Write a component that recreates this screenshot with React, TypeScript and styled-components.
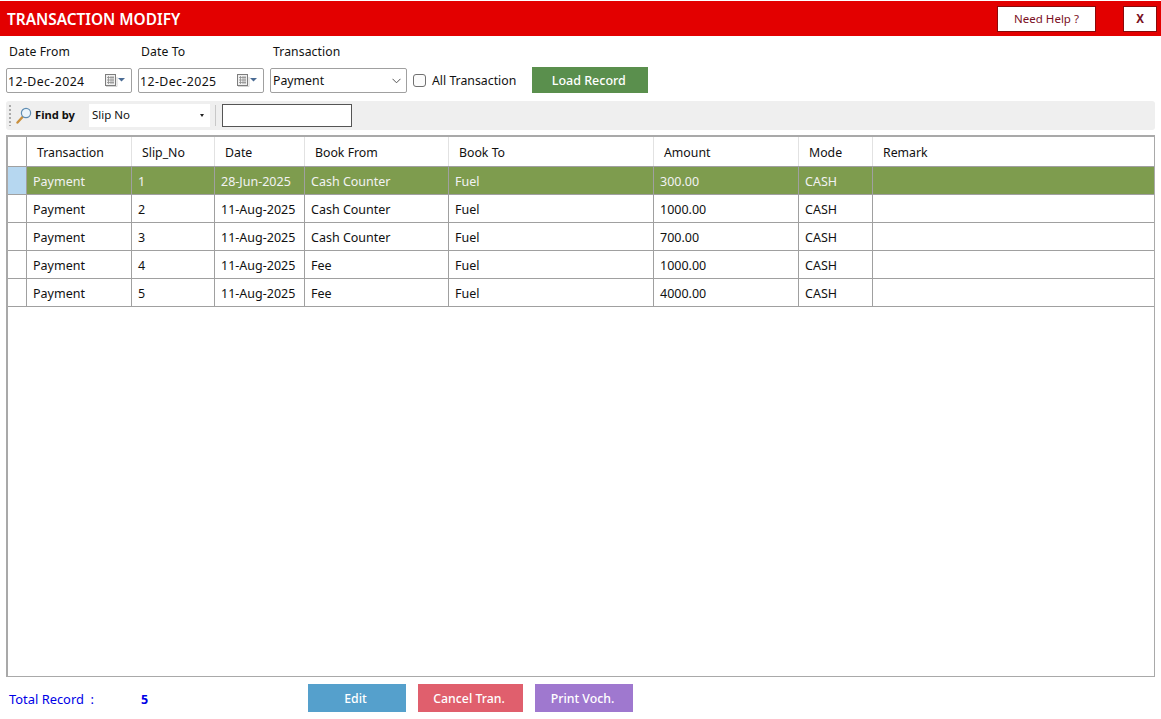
import React from "react";
import styled, { createGlobalStyle } from "styled-components";

const Global = createGlobalStyle`
  html, body { margin: 0; padding: 0; background: #fff; }
  * { box-sizing: border-box; }
  body { font-family: "Noto Sans", "Open Sans", sans-serif; font-size: 12px; color: #111; }
`;

const Page = styled.div`
  width: 1161px;
  height: 719px;
  padding-top: 1px;
  display: flex;
  flex-direction: column;
  overflow: hidden;
`;

const Header = styled.header`
  height: 35px;
  background: #e30000;
  display: flex;
  align-items: center;
  padding: 0 4px 0 7px;
`;

const Title = styled.h1`
  margin: 0;
  flex: 1;
  padding-top: 2px;
  font-size: 15.4px;
  font-weight: 600;
  color: #fff;
`;

const HeadButton = styled.button<{ $w: number; $bold?: boolean }>`
  width: ${(p) => p.$w}px;
  height: 26px;
  margin-left: ${(p) => (p.$bold ? 27 : 0)}px;
  background: #fff;
  border: 1px solid #8a0a0a;
  color: #7a0f1e;
  font: ${(p) => (p.$bold ? 700 : 400)} 11.5px "Noto Sans", sans-serif;
  padding: 0;
`;

const Labels = styled.div`
  height: 32px;
  display: flex;
  align-items: flex-end;
  padding: 0 0 8px 9px;
`;

const Label = styled.label<{ $w: number }>`
  width: ${(p) => p.$w}px;
  font-size: 12.2px;
  line-height: 17px;
  letter-spacing: 0.1px;
`;

const Filters = styled.div`
  display: flex;
  align-items: flex-start;
  padding-left: 6px;
  height: 33px;
`;

const Field = styled.div<{ $w: number; $ml?: number }>`
  width: ${(p) => p.$w}px;
  height: 25px;
  margin-left: ${(p) => p.$ml ?? 0}px;
  border: 1px solid #a0a0a0;
  border-radius: 2px;
  background: #fff;
  display: flex;
  align-items: center;
  padding: 0 5px 0 1px;
  font-size: 12.3px;
`;

const DateText = styled.span`
  flex: 1;
  padding-top: 1px;
  white-space: pre;
  letter-spacing: 0.42px;
`;

const FieldText = styled.span`
  flex: 1;
  white-space: pre;
  padding-left: 1px;
`;

const CheckWrap = styled.label`
  display: flex;
  align-items: center;
  margin: 1px 0 0 6px;
  height: 22px;
  font-size: 12.3px;
  gap: 6px;
`;

const CheckBox = styled.span`
  width: 13px;
  height: 13px;
  border: 1px solid #707070;
  border-radius: 3px;
  background: #fbfbfb;
`;

const LoadButton = styled.button`
  width: 116px;
  height: 26px;
  margin-left: 16px;
  margin-top: -1px;
  border: 0;
  background: #5a8f4d;
  color: #fff;
  font: 500 12.5px "Noto Sans", sans-serif;
  padding: 0 3px 0 0;
`;

const Toolbar = styled.div`
  margin: 0 6px;
  height: 29px;
  background: #efefef;
  border-radius: 3px;
  display: flex;
  align-items: center;
  padding-left: 3px;
`;

const Grip = styled.span`
  width: 2px;
  height: 21px;
  margin-right: 5px;
  background-image: linear-gradient(#aaa 50%, transparent 50%);
  background-size: 2px 4px;
`;

const FindBy = styled.b`
  font-size: 11.2px;
  font-weight: 700;
  margin: -2px 0 0 3px;
  width: 54px;
`;

const FindSelect = styled.div`
  width: 121px;
  height: 23px;
  background: #fff;
  display: flex;
  align-items: center;
  padding: 0 6px 2px 3px;
  font-size: 11.5px;
  justify-content: space-between;
`;

const Caret = styled.span`
  width: 0;
  height: 0;
  margin-top: 2px;
  border-left: 2.5px solid transparent;
  border-right: 2.5px solid transparent;
  border-top: 3px solid #222;
`;

const Sep = styled.span`
  width: 1px;
  height: 21px;
  background: #c8c8c8;
  margin: 0 6px 0 5px;
`;

const FindInput = styled.div`
  width: 130px;
  height: 23px;
  background: #fff;
  border: 1px solid #555;
`;

const Grid = styled.div`
  margin: 5px 6px 0;
  height: 542px;
  border: 1px solid #a9a9a9;
  border-top-width: 2px;
  border-left-width: 2px;
  background: #fff;
  overflow: hidden;
`;

const COLUMNS = "19px 105px 83px 90px 144px 205px 145px 74px 1fr";

const HeadRow = styled.div`
  display: grid;
  grid-template-columns: ${COLUMNS};
  height: 30px;
  border-bottom: 1px solid #a0a0a0;
`;

const HeadCell = styled.div`
  border-right: 1px solid #e2e2e2;
  padding: 1px 0 0 10px;
  display: flex;
  align-items: center;
  font-size: 12.3px;
  &:first-child { border-right-color: #a0a0a0; }
  &:last-child { border-right: 0; }
`;

const Row = styled.div<{ $on?: boolean }>`
  display: grid;
  grid-template-columns: ${COLUMNS};
  height: 28px;
  border-bottom: 1px solid #a0a0a0;
  background: ${(p) => (p.$on ? "#7e9c4e" : "#fff")};
  color: ${(p) => (p.$on ? "#f2f2f2" : "#111")};
`;

const RowHead = styled.div<{ $on?: boolean }>`
  background: ${(p) => (p.$on ? "#b6d7f0" : "#fff")};
  border-right: 1px solid #a0a0a0;
`;

const Cell = styled.div`
  border-right: 1px solid #a0a0a0;
  padding: 2px 0 0 6px;
  display: flex;
  align-items: center;
  font-size: 12.5px;
  white-space: nowrap;
  &:last-child { border-right: 0; }
`;

const Footer = styled.footer`
  display: flex;
  align-items: center;
  padding: 7px 0 0 9px;
`;

const TotalLabel = styled.span`
  width: 132px;
  color: #0000e6;
  font-size: 12.9px;
  margin-top: 2px;
  white-space: pre;
`;

const TotalValue = styled.b`
  width: 167px;
  color: #0000e6;
  font-size: 12.5px;
  margin-top: 3px;
`;

const ActionButton = styled.button<{ $w: number; $bg: string; $ml: number }>`
  width: ${(p) => p.$w}px;
  height: 28px;
  margin-left: ${(p) => p.$ml}px;
  border: 0;
  background: ${(p) => p.$bg};
  color: #fff;
  font: 500 12.3px "Noto Sans", sans-serif;
  padding: 0 3px 0 0;
`;

const CalendarIcon = () => (
  <svg width="21" height="13" viewBox="0 0 21 13">
    <rect x="0.5" y="0.5" width="10" height="11" fill="#f0f0f0" stroke="#7d7d7d" />
    <path d="M2 3.5h7M2 6h7M2 8.5h7M3.5 2v8M6 2v8M8 2v8" stroke="#8f8f8f" strokeWidth="0.8" />
    <path d="M1 12.5h11V3" stroke="#d4d4d4" fill="none" />
    <path d="M13 4h7l-3.5 3.4z" fill="#4a6b94" />
  </svg>
);

const LoupeIcon = () => (
  <svg width="16" height="17" viewBox="0 0 16 17">
    <path d="M1.5 15.5 L6.5 10" stroke="#c98f3c" strokeWidth="2.4" strokeLinecap="round" />
    <circle cx="10" cy="6" r="4.6" fill="#eaf4fb" stroke="#5f8db3" strokeWidth="1.2" />
  </svg>
);

const ChevronIcon = () => (
  <svg width="9" height="6" viewBox="0 0 9 6">
    <path d="M0.5 0.8 L4.5 4.8 L8.5 0.8" stroke="#555" fill="none" />
  </svg>
);

const COLS = ["Transaction", "Slip_No", "Date", "Book From", "Book To", "Amount", "Mode", "Remark"];
const ROWS = [
  ["Payment", "1", "28-Jun-2025", "Cash Counter", "Fuel", "300.00", "CASH", ""],
  ["Payment", "2", "11-Aug-2025", "Cash Counter", "Fuel", "1000.00", "CASH", ""],
  ["Payment", "3", "11-Aug-2025", "Cash Counter", "Fuel", "700.00", "CASH", ""],
  ["Payment", "4", "11-Aug-2025", "Fee", "Fuel", "1000.00", "CASH", ""],
  ["Payment", "5", "11-Aug-2025", "Fee", "Fuel", "4000.00", "CASH", ""],
];

export default function App() {
  return (
    <Page>
      <Global />
      <Header>
        <Title>TRANSACTION MODIFY</Title>
        <HeadButton $w={99}>Need Help ?</HeadButton>
        <HeadButton $w={34} $bold>X</HeadButton>
      </Header>
      <Labels>
        <Label $w={132}>Date From</Label>
        <Label $w={132}>Date To</Label>
        <Label $w={120}>Transaction</Label>
      </Labels>
      <Filters>
        <Field $w={126}>
          <DateText>12-Dec-2024</DateText>
          <CalendarIcon />
        </Field>
        <Field $w={126} $ml={6}>
          <DateText>12-Dec-2025</DateText>
          <CalendarIcon />
        </Field>
        <Field $w={137} $ml={6}>
          <FieldText>Payment</FieldText>
          <ChevronIcon />
        </Field>
        <CheckWrap>
          <CheckBox />
          All Transaction
        </CheckWrap>
        <LoadButton>Load Record</LoadButton>
      </Filters>
      <Toolbar>
        <Grip />
        <LoupeIcon />
        <FindBy>Find by</FindBy>
        <FindSelect>
          Slip No
          <Caret />
        </FindSelect>
        <Sep />
        <FindInput />
      </Toolbar>
      <Grid>
        <HeadRow>
          <HeadCell />
          {COLS.map((c) => (
            <HeadCell key={c}>{c}</HeadCell>
          ))}
        </HeadRow>
        {ROWS.map((r, i) => (
          <Row key={r[1]} $on={i === 0}>
            <RowHead $on={i === 0} />
            {r.map((v, j) => (
              <Cell key={j}>{v}</Cell>
            ))}
          </Row>
        ))}
      </Grid>
      <Footer>
        <TotalLabel>{"Total Record  :"}</TotalLabel>
        <TotalValue>5</TotalValue>
        <ActionButton $w={98} $bg="#55a0cc" $ml={0}>Edit</ActionButton>
        <ActionButton $w={105} $bg="#e05f6d" $ml={12}>Cancel Tran.</ActionButton>
        <ActionButton $w={98} $bg="#9f78cf" $ml={12}>Print Voch.</ActionButton>
      </Footer>
    </Page>
  );
}
